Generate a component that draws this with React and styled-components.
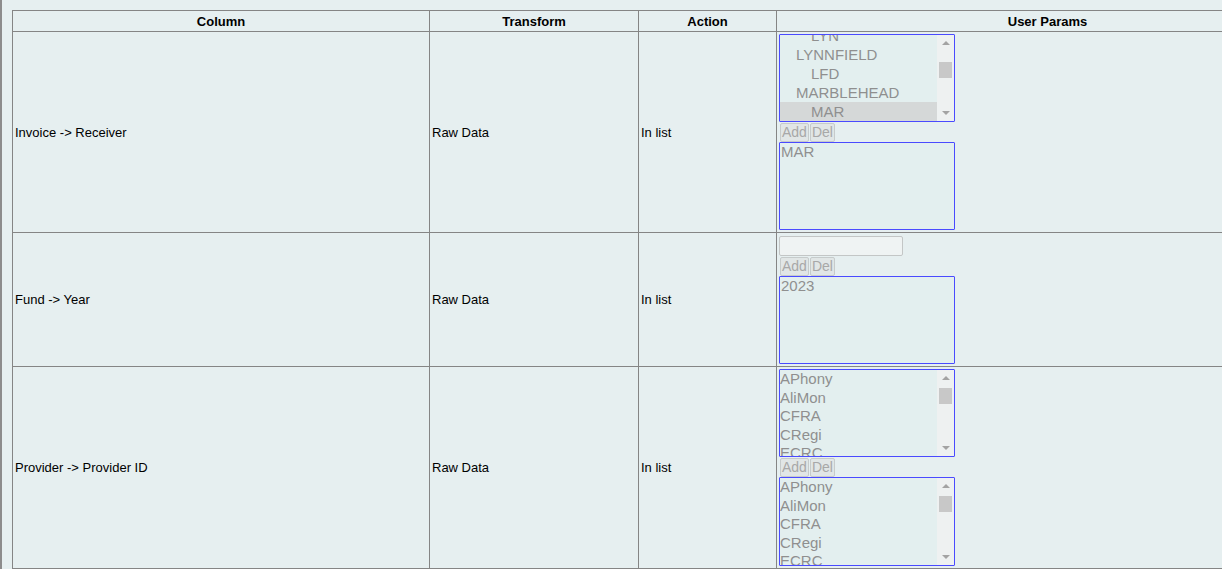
import React from "react";
import styled, { createGlobalStyle } from "styled-components";

// Page reset: no margin, no scrollbars, Arial-like font
const GlobalStyle = createGlobalStyle`
  html, body {
    margin: 0;
    padding: 0;
    overflow: hidden;
    background: #e6eff0;
    font-family: "Liberation Sans", Arial, sans-serif;
  }
`;

// Outer frame with the grey rule on the left edge
const Frame = styled.div`
  border-left: 2px solid #8c8c8c;
  padding: 10px 0 0 10px;
  height: 569px;
  width: 1222px;
  overflow: hidden;
  box-sizing: border-box;
`;

const Table = styled.table`
  border-collapse: collapse;
  width: 1307px;
  table-layout: fixed;
  font-size: 13px;
  color: #000;
`;

const Th = styled.th`
  border: 1px solid #858585;
  height: 20px;
  padding: 0 2px;
  font-weight: bold;
  text-align: center;
  vertical-align: middle;
`;

const Td = styled.td`
  border: 1px solid #858585;
  padding: 2px 2px;
  vertical-align: middle;
  height: ${({ $h }) => $h}px;
  box-sizing: border-box;
`;

// Stacked controls in the "User Params" cell
const Params = styled.div`
  display: flex;
  flex-direction: column;
  align-items: flex-start;
`;

// Disabled list box with a hand-drawn scrollbar
const ListBox = styled.div`
  width: 176px;
  height: ${({ $h }) => $h || 88}px;
  box-sizing: border-box;
  border: 1px solid #4a4aff;
  border-radius: 1px;
  background: #e3efef;
  display: flex;
  overflow: hidden;
`;

const Options = styled.div`
  flex: 1;
  display: flex;
  flex-direction: column;
  justify-content: ${({ $bottom }) => ($bottom ? "flex-end" : "flex-start")};
  overflow: hidden;
  font-size: 15px;
  color: #8f8f8f;
`;

const Option = styled.div`
  flex: none;
  height: ${({ $lh }) => $lh}px;
  line-height: ${({ $lh }) => $lh}px;
  padding-left: ${({ $indent }) => $indent}px;
  background: ${({ $selected }) => ($selected ? "#d5d8d8" : "transparent")};
  white-space: nowrap;
`;

const ScrollTrack = styled.div`
  width: 17px;
  flex: none;
  background: #eef1f1;
  display: flex;
  flex-direction: column;
`;

const ArrowBox = styled.div`
  height: 16px;
  flex: none;
  display: flex;
  align-items: center;
  justify-content: center;
`;

const ArrowUp = styled.div`
  width: 0;
  height: 0;
  border-left: 4px solid transparent;
  border-right: 4px solid transparent;
  border-bottom: 4px solid #a3a3a3;
`;

const ArrowDown = styled(ArrowUp)`
  border-bottom: none;
  border-top: 4px solid #a3a3a3;
`;

const ThumbArea = styled.div`
  flex: 1;
  padding: 0 2px;
`;

const Thumb = styled.div`
  height: 16px;
  background: #c8c8c8;
`;

const ButtonRow = styled.div`
  display: flex;
  gap: 1px;
  margin: 1px 0 0 1px;
`;

const SmallButton = styled.div`
  height: 19px;
  box-sizing: border-box;
  padding: 0 1px;
  border: 1px solid #c6cbcb;
  border-radius: 2px;
  background: #e1e6e6;
  color: #a8a8a8;
  font-size: 14px;
  line-height: 17px;
`;

const TextBox = styled.div`
  width: 176px;
  height: 88px;
  box-sizing: border-box;
  border: 1px solid #4a4aff;
  border-radius: 1px;
  background: #e3efef;
  color: #8f8f8f;
  font-size: 15px;
  line-height: 15px;
  padding: 1px 0 0 1px;
`;

const TextInput = styled.div`
  width: 124px;
  height: 20px;
  box-sizing: border-box;
  border: 1px solid #c3c6c6;
  border-radius: 2px;
  background: #eff3f3;
`;

const Scrollbar = ({ thumbTop }) => (
  <ScrollTrack>
    <ArrowBox>
      <ArrowUp />
    </ArrowBox>
    <ThumbArea>
      <Thumb style={{ marginTop: thumbTop }} />
    </ThumbArea>
    <ArrowBox>
      <ArrowDown />
    </ArrowBox>
  </ScrollTrack>
);

const List = ({ items, lh, bottom, thumbTop, h }) => (
  <ListBox $h={h}>
    <Options $bottom={bottom}>
      {items.map((it) => (
        <Option key={it.label} $lh={lh} $indent={it.indent} $selected={it.selected}>
          {it.label}
        </Option>
      ))}
    </Options>
    <Scrollbar thumbTop={thumbTop} />
  </ListBox>
);

const AddDel = () => (
  <ButtonRow>
    <SmallButton>Add</SmallButton>
    <SmallButton>Del</SmallButton>
  </ButtonRow>
);

const towns = [
  { label: "LYN", indent: 31 },
  { label: "LYNNFIELD", indent: 16 },
  { label: "LFD", indent: 31 },
  { label: "MARBLEHEAD", indent: 16 },
  { label: "MAR", indent: 31, selected: true },
];

const providers = ["APhony", "AliMon", "CFRA", "CRegi", "ECRC"].map((label) => ({
  label,
  indent: 0,
}));

const App = () => {
  return (
    <>
      <GlobalStyle />
      <Frame>
        <Table>
          <colgroup>
            <col style={{ width: 417 }} />
            <col style={{ width: 209 }} />
            <col style={{ width: 138 }} />
            <col />
          </colgroup>
          <thead>
            <tr>
              <Th>Column</Th>
              <Th>Transform</Th>
              <Th>Action</Th>
              <Th>User Params</Th>
            </tr>
          </thead>
          <tbody>
            <tr>
              <Td $h={201}>Invoice -&gt; Receiver</Td>
              <Td $h={201}>Raw Data</Td>
              <Td $h={201}>In list</Td>
              <Td $h={201}>
                <Params>
                  <List items={towns} lh={19} bottom thumbTop={11} />
                  <AddDel />
                  <TextBox>MAR</TextBox>
                </Params>
              </Td>
            </tr>
            <tr>
              <Td $h={134}>Fund -&gt; Year</Td>
              <Td $h={134}>Raw Data</Td>
              <Td $h={134}>In list</Td>
              <Td $h={134}>
                <Params>
                  <TextInput />
                  <AddDel />
                  <TextBox>2023</TextBox>
                </Params>
              </Td>
            </tr>
            <tr>
              <Td $h={202}>Provider -&gt; Provider ID</Td>
              <Td $h={202}>Raw Data</Td>
              <Td $h={202}>In list</Td>
              <Td $h={202}>
                <Params>
                  <List items={providers} lh={18.5} thumbTop={2} />
                  <AddDel />
                  <List items={providers} lh={18.5} thumbTop={2} h={89} />
                </Params>
              </Td>
            </tr>
          </tbody>
        </Table>
      </Frame>
    </>
  );
};

export default App;
